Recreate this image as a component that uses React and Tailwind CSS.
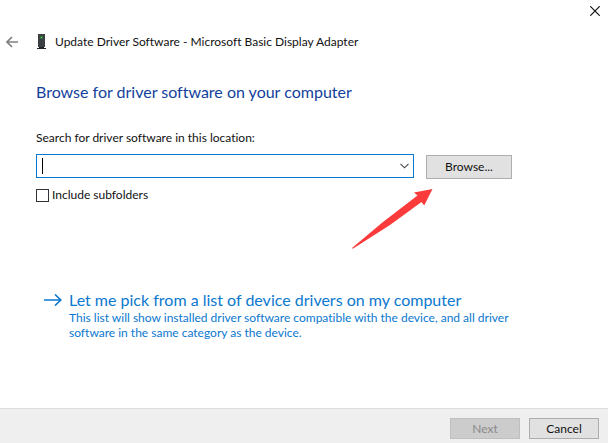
import React, { useState } from "react";

const DeviceIcon = () => (
  <svg className="w-3 h-4 shrink-0" viewBox="0 0 12 16" aria-hidden="true">
    <rect x="2" y="0" width="7" height="13" fill="#3c3f41" />
    <rect x="4" y="2" width="3" height="3" fill="#2d6b3b" />
    <rect x="5" y="3" width="1" height="1" fill="#62e07c" />
    <path d="M3 13h5v1h2v1H1v-1h2z" fill="#222" />
  </svg>
);

const BackIcon = () => (
  <svg className="w-3 h-3" viewBox="0 0 12 12" fill="none" aria-hidden="true">
    <path d="M12 6H1M6 1L1 6l5 5" stroke="#808080" strokeWidth="1.7" />
  </svg>
);

const CloseIcon = () => (
  <svg className="w-2.5 h-2.5" viewBox="0 0 10 10" aria-hidden="true">
    <path d="M0.3 0.3l9.4 9.4M9.7 0.3L0.3 9.7" stroke="#111" strokeWidth="1.2" />
  </svg>
);

const LinkArrow = () => (
  <svg className="w-[18px] h-3 mt-1 shrink-0" viewBox="0 0 18 12" fill="none" aria-hidden="true">
    <path d="M0 6h17M11 0.5L16.8 6 11 11.5" stroke="#0a78cf" strokeWidth="1.6" />
  </svg>
);

// Red pointer that calls out the Browse button
const Pointer = () => (
  <svg
    className="absolute top-[34px] right-[79px] w-[82px] h-[61px] pointer-events-none"
    viewBox="0 0 82 61"
    aria-hidden="true"
  >
    <path
      d="M81.5 1L63 4.5l3.5 3L32 34 1 60l0.8 0.8L39 37 70.5 14l2.7 3.6z"
      fill="#fb3b3b"
    />
  </svg>
);

const App = () => {
  const [location, setLocation] = useState("");
  const [subfolders, setSubfolders] = useState(false);

  return (
    <div className="flex flex-col min-h-screen bg-white text-[12px] leading-4 text-[#111] font-['Lato','Open_Sans',sans-serif] [font-variant-ligatures:none]">
      {/* Title bar */}
      <div className="flex justify-end pt-1.5 pr-2">
        <button type="button" aria-label="Close">
          <CloseIcon />
        </button>
      </div>

      <header className="flex items-center px-1.5 mt-[18px]">
        <button type="button" aria-label="Back" className="mr-[18px]">
          <BackIcon />
        </button>
        <DeviceIcon />
        <span className="ml-[7px]">
          Update Driver Software - Microsoft Basic Display Adapter
        </span>
      </header>

      <main className="flex-1 pl-9 pr-24 mt-8">
        <h1 className="text-[16px] leading-5 text-[#123f9c]">
          Browse for driver software on your computer
        </h1>

        <label htmlFor="location" className="block mt-7">
          Search for driver software in this location:
        </label>
        <div className="relative flex items-start gap-3 mt-2">
          <div className="relative flex flex-1 min-w-0 h-6 border border-[#0a78cf]">
            <input
              id="location"
              type="text"
              value={location}
              onChange={(e) => setLocation(e.target.value)}
              className="flex-1 min-w-0 px-1 outline-none"
            />
            {location === "" && (
              <span className="absolute left-[5px] top-[3px] w-px h-4 bg-black" />
            )}
            <button type="button" aria-label="Show recent locations" className="px-1">
              <svg className="w-[9px] h-[6px]" viewBox="0 0 9 6" fill="none" aria-hidden="true">
                <path d="M0.5 0.8l4 4 4-4" stroke="#444" strokeWidth="1.1" />
              </svg>
            </button>
          </div>
          <button
            type="button"
            className="w-[86px] h-6 mt-px border border-[#adadad] bg-[#e1e1e1]"
          >
            Browse...
          </button>
          <Pointer />
        </div>

        <label className="flex items-center gap-[3px] mt-2">
          <input
            type="checkbox"
            checked={subfolders}
            onChange={(e) => setSubfolders(e.target.checked)}
            className="appearance-none w-[13px] h-[13px] border border-[#333] bg-white checked:bg-[#0a78cf]"
          />
          Include subfolders
        </label>

        <a href="#pick" className="flex gap-[7px] pl-2 mt-[87px] text-[#0a78cf]">
          <LinkArrow />
          <span>
            <span className="block text-[16px] leading-5">
              Let me pick from a list of device drivers on my computer
            </span>
            <span className="block leading-[15px]">
              This list will show installed driver software compatible with the
              device, and all driver software in the same category as the device.
            </span>
          </span>
        </a>
      </main>

      <footer className="flex justify-end gap-[9px] pt-[9px] pb-1 pr-[9px] border-t border-[#dcdcdc] bg-[#efefef]">
        <button
          type="button"
          disabled
          className="w-[70px] h-[21px] border border-[#bfbfbf] bg-[#cccccc] text-[#8a8a8a]"
        >
          Next
        </button>
        <button
          type="button"
          className="w-[70px] h-[21px] border border-[#adadad] bg-[#e1e1e1]"
        >
          Cancel
        </button>
      </footer>
    </div>
  );
};

export default App;
